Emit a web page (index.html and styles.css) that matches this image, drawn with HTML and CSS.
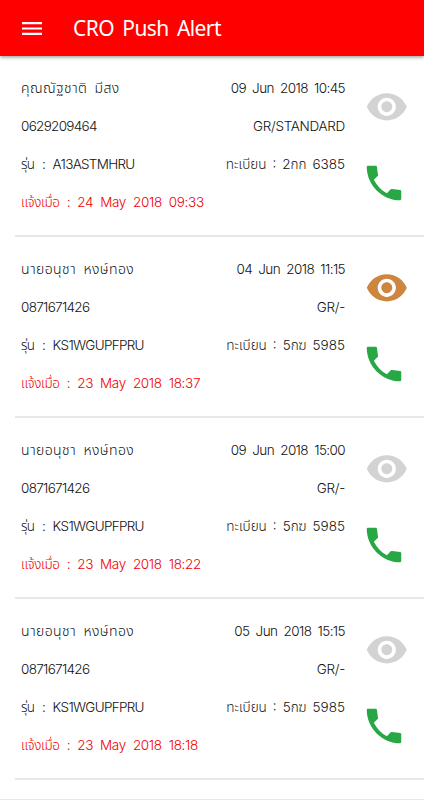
FILE: index.html
```html
<!DOCTYPE html>
<html lang="th">
<head>
    <meta charset="UTF-8">
    <meta name="viewport" content="width=device-width, initial-scale=1.0">
    <title>CRO Push Alert</title>
    <link rel="stylesheet" href="styles.css">
</head>
<body>

<svg class="symbols" aria-hidden="true">
    <symbol id="eye" viewBox="0 0 24 24">
        <path d="M12 4.5C7 4.5 2.73 7.61 1 12c1.73 4.39 6 7.5 11 7.5s9.27-3.11 11-7.5c-1.73-4.39-6-7.5-11-7.5zM12 17c-2.76 0-5-2.24-5-5s2.24-5 5-5 5 2.24 5 5-2.24 5-5 5zm0-8c-1.66 0-3 1.34-3 3s1.34 3 3 3 3-1.34 3-3-1.34-3-3-3z"/>
    </symbol>
    <symbol id="phone" viewBox="0 0 24 24">
        <path d="M3.6 3H7.7Q8.2 3 8.3 3.5L8.9 7.9Q8.9 8.2 8.7 8.4L6.7 10.3C8.2 13.3 10.5 15.8 13.5 17.3L15.5 15.3Q15.8 15 16.2 15.1L20.5 15.6Q21 15.7 21 16.2V20.4Q21 21 20.4 21C11 21 3 13 3 3.6Q3 3 3.6 3z"/>
    </symbol>
</svg>

<header class="toolbar">
    <svg class="menu" viewBox="0 0 20 13"><path d="M0 0h20v2.2H0zM0 5.4h20v2.2H0zM0 10.8h20V13H0z"/></svg>
    <h1 class="title">CRO Push Alert</h1>
</header>

<main class="list">
    <div class="item">
        <div class="info">
            <div class="row"><span class="name">คุณณัฐชาติ มีสง</span><span class="date">09 Jun 2018 10:45</span></div>
            <div class="row"><span class="tel">0629209464</span><span class="grade">GR/STANDARD</span></div>
            <div class="row"><span class="model">รุ่น : A13ASTMHRU</span><span class="plate">ทะเบียน : 2กก 6385</span></div>
            <div class="row"><span class="notified">แจ้งเมื่อ : 24 May 2018 09:33</span></div>
        </div>
        <div class="actions">
            <svg class="eye"><use href="#eye"/></svg>
            <svg class="phone"><use href="#phone"/></svg>
        </div>
    </div>
    <div class="item">
        <div class="info">
            <div class="row"><span class="name">นายอนุชา หงษ์ทอง</span><span class="date">04 Jun 2018 11:15</span></div>
            <div class="row"><span class="tel">0871671426</span><span class="grade">GR/-</span></div>
            <div class="row"><span class="model">รุ่น : KS1WGUPFPRU</span><span class="plate">ทะเบียน : 5กฆ 5985</span></div>
            <div class="row"><span class="notified">แจ้งเมื่อ : 23 May 2018 18:37</span></div>
        </div>
        <div class="actions">
            <svg class="eye active"><use href="#eye"/></svg>
            <svg class="phone"><use href="#phone"/></svg>
        </div>
    </div>
    <div class="item">
        <div class="info">
            <div class="row"><span class="name">นายอนุชา หงษ์ทอง</span><span class="date">09 Jun 2018 15:00</span></div>
            <div class="row"><span class="tel">0871671426</span><span class="grade">GR/-</span></div>
            <div class="row"><span class="model">รุ่น : KS1WGUPFPRU</span><span class="plate">ทะเบียน : 5กฆ 5985</span></div>
            <div class="row"><span class="notified">แจ้งเมื่อ : 23 May 2018 18:22</span></div>
        </div>
        <div class="actions">
            <svg class="eye"><use href="#eye"/></svg>
            <svg class="phone"><use href="#phone"/></svg>
        </div>
    </div>
    <div class="item">
        <div class="info">
            <div class="row"><span class="name">นายอนุชา หงษ์ทอง</span><span class="date">05 Jun 2018 15:15</span></div>
            <div class="row"><span class="tel">0871671426</span><span class="grade">GR/-</span></div>
            <div class="row"><span class="model">รุ่น : KS1WGUPFPRU</span><span class="plate">ทะเบียน : 5กฆ 5985</span></div>
            <div class="row"><span class="notified">แจ้งเมื่อ : 23 May 2018 18:18</span></div>
        </div>
        <div class="actions">
            <svg class="eye"><use href="#eye"/></svg>
            <svg class="phone"><use href="#phone"/></svg>
        </div>
    </div>
</main>
<footer class="bottom"></footer>

</body>
</html>
```

FILE: styles.css
```css
* {
    box-sizing: border-box;
}
body {
    margin: 0;
    height: 800px;
    overflow: hidden;
    display: flex;
    flex-direction: column;
    background-color: #fff;
    color: #111;
    font-family: Inter, "Noto Sans Thai", "Noto Sans", sans-serif;
    font-size: 13.5px;
    font-weight: 300;
}
.symbols {
    display: none;
}
.toolbar {
    height: 56px;
    flex: none;
    display: flex;
    align-items: center;
    padding-left: 22px;
    gap: 31px;
    background-color: #f00;
    box-shadow: 0 1px 4px rgba(0, 0, 0, 0.45);
}
.menu {
    width: 20px;
    height: 13px;
    fill: #fff;
}
.title {
    margin: 0;
    color: #fff;
    font-family: "Noto Sans", sans-serif;
    font-size: 21px;
    font-weight: 400;
    letter-spacing: -0.6px;
    word-spacing: 3.5px;
}
.list {
    flex: none;
    padding: 0 0 0 15px;
}
.item {
    height: 181px;
    display: flex;
    border-bottom: 2px solid #e8e8e8;
}
.info {
    width: 330px;
    padding: 13px 0 0 6px;
}
.row {
    height: 38.3px;
    display: flex;
    align-items: center;
    justify-content: space-between;
    white-space: nowrap;
    letter-spacing: -0.7px;
    word-spacing: 4px;
}
.name {
    font-size: 14px;
    letter-spacing: 0.4px;
    word-spacing: 3px;
}
.date {
    letter-spacing: -0.6px;
    word-spacing: 3px;
}
.grade {
    letter-spacing: -0.3px;
}
.model {
    word-spacing: 4.5px;
}
.plate {
    letter-spacing: 0;
    word-spacing: 2.2px;
}
.notified {
    color: #f00000;
    letter-spacing: -0.35px;
    word-spacing: 3.6px;
}
.actions {
    flex: 1;
    display: flex;
    flex-direction: column;
    padding: 29px 0 0 16px;
    gap: 31px;
}
.eye {
    width: 43.6px;
    height: 43.6px;
    margin-left: 4px;
    fill: #d3d3d3;
}
.eye.active {
    fill: #cd853f;
}
.phone {
    width: 46px;
    height: 46px;
    fill: #28a745;
}
.bottom {
    margin-top: auto;
    height: 1px;
    background-color: #e8e8e8;
}
```
